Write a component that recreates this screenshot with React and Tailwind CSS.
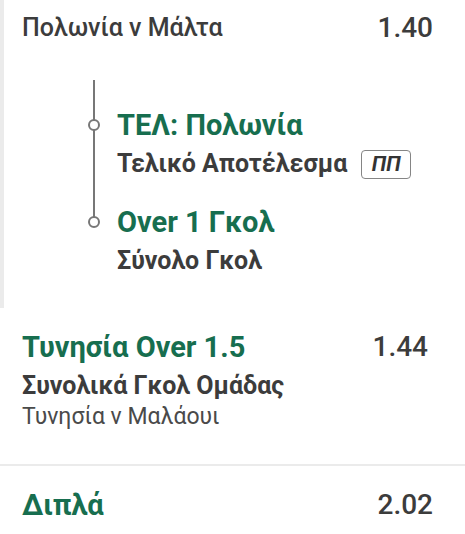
import React from 'react';

const green = 'text-[#176e4f]';
const dark = 'text-[#3c3c3c]';

const Leg = ({ title, market, badge }) => (
  <div className="relative pl-[25px]">
    <div className="absolute left-[-4px] top-[12px] w-[12px] h-[12px] rounded-full border-2 border-[#777777] bg-white" />
    <div className={`text-[29px] leading-[36px] font-bold ${green}`}>{title}</div>
    <div className="flex items-center gap-[14px] mt-[6px] h-[30px]">
      <span className={`text-[25px] leading-[30px] font-bold ${dark}`}>{market}</span>
      {badge && (
        <span className="border-[1.5px] border-[#858585] rounded-[4px] w-[50px] h-[29px] flex items-center justify-center text-[21px] leading-none font-bold italic text-[#333333]">
          {badge}
        </span>
      )}
    </div>
  </div>
);

const App = () => {
  return (
    <div className="w-[465px] h-[534px] bg-white overflow-hidden" style={{ fontFamily: 'Roboto, "Noto Sans", sans-serif' }}>
      <div className="border-l-4 border-[#ebebeb] pl-[18px] pr-[32px] pt-[10px] pb-[32px]">
        <div className="flex justify-between items-center h-[36px]">
          <span className={`text-[25px] leading-[36px] font-medium ${dark}`}>Πολωνία ν Μάλτα</span>
          <span className={`text-[28px] leading-[36px] font-medium ${dark}`}>1.40</span>
        </div>
        <div className="relative ml-[70px] mt-[61px] flex flex-col gap-[25px]">
          <div className="absolute left-[1px] top-[-27px] h-[142px] w-[2px] bg-[#777777]" />
          <Leg title="ΤΕΛ: Πολωνία" market="Τελικό Αποτέλεσμα" badge="ΠΠ" />
          <Leg title="Over 1 Γκολ" market="Σύνολο Γκολ" />
        </div>
      </div>
      <div className="pl-[22px] pr-[37px] pt-[21px] pb-[32px] border-b-2 border-[#ebebeb]">
        <div className="flex justify-between items-center h-[36px]">
          <span className={`text-[29px] leading-[36px] font-bold ${green}`}>Τυνησία Over 1.5</span>
          <span className={`text-[28px] leading-[36px] font-medium ${dark}`}>1.44</span>
        </div>
        <div className={`text-[25px] leading-[30px] font-bold ${dark} mt-[6px]`}>Συνολικά Γκολ Ομάδας</div>
        <div className="text-[23px] leading-[30px] text-[#4a4a4a] mt-[1px]">Τυνησία ν Μαλάουι</div>
      </div>
      <div className="pl-[22px] pr-[32px] pt-[21px] flex justify-between items-center h-[57px]">
        <span className={`text-[29px] leading-[36px] font-bold ${green}`}>Διπλά</span>
        <span className={`text-[28px] leading-[36px] font-medium ${dark}`}>2.02</span>
      </div>
    </div>
  );
};

export default App;
